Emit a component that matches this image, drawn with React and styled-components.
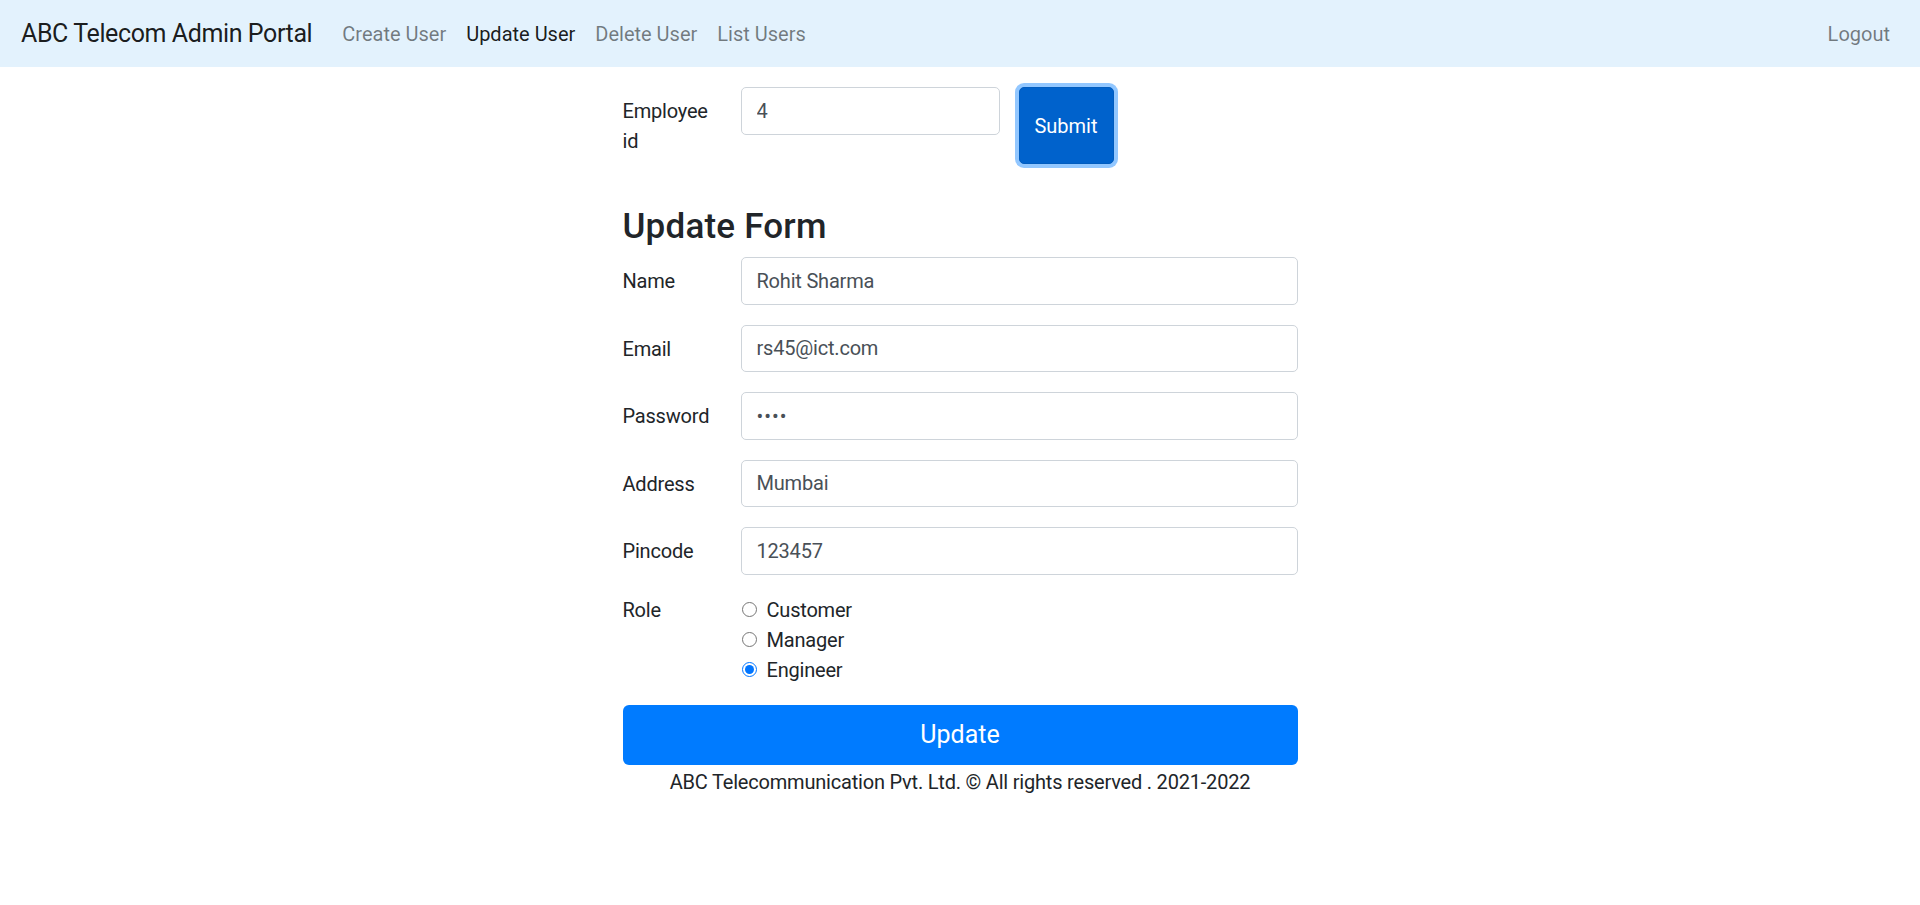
import React from 'react';
import styled, { createGlobalStyle } from 'styled-components';

const GlobalStyle = createGlobalStyle`
  body {
    margin: 0;
    background: #fff;
    color: #212529;
    font-family: Roboto, "Liberation Sans", sans-serif;
    font-size: 20px;
    line-height: 1.5;
    letter-spacing: -0.2px;
  }
  * {
    box-sizing: border-box;
  }
`;

const App = () => {
  return (
    <>
      <GlobalStyle />
      <Navbar>
        <Brand>ABC Telecom Admin Portal</Brand>
        <NavList>
          <NavLink>Create User</NavLink>
          <NavLink active>Update User</NavLink>
          <NavLink>Delete User</NavLink>
          <NavLink>List Users</NavLink>
        </NavList>
        <NavLink>Logout</NavLink>
      </Navbar>
      <Main>
        <SearchRow>
          <Label narrow>Employee id</Label>
          <SearchInput defaultValue="4" />
          <SubmitButton>Submit</SubmitButton>
        </SearchRow>

        <Heading>Update Form</Heading>
        <FormRow>
          <Label>Name</Label>
          <Input defaultValue="Rohit Sharma" />
        </FormRow>
        <FormRow>
          <Label>Email</Label>
          <Input defaultValue="rs45@ict.com" />
        </FormRow>
        <FormRow>
          <Label>Password</Label>
          <Input type="password" defaultValue="1234" />
        </FormRow>
        <FormRow>
          <Label>Address</Label>
          <Input defaultValue="Mumbai" />
        </FormRow>
        <FormRow>
          <Label>Pincode</Label>
          <Input defaultValue="123457" />
        </FormRow>
        <FormRow>
          <Label flush>Role</Label>
          <RadioGroup>
            {['Customer', 'Manager', 'Engineer'].map((role) => (
              <RadioItem key={role}>
                <Radio type="radio" name="role" defaultChecked={role === 'Engineer'} />
                {role}
              </RadioItem>
            ))}
          </RadioGroup>
        </FormRow>
        <UpdateButton>Update</UpdateButton>
        <Footer>ABC Telecommunication Pvt. Ltd. © All rights reserved . 2021-2022</Footer>
      </Main>
    </>
  );
};

const Navbar = styled.nav`
  height: 67px;
  background: #e3f2fd;
  display: flex;
  align-items: center;
  padding: 0 20px 0 21px;
`;

const Brand = styled.span`
  font-size: 25px;
  letter-spacing: -0.4px;
  color: rgba(0, 0, 0, 0.9);
  margin-right: 20px;
  white-space: nowrap;
`;

const NavList = styled.div`
  display: flex;
  flex: 1;
`;

const NavLink = styled.span`
  padding: 0 10px;
  font-size: 20px;
  letter-spacing: 0;
  color: ${(p) => (p.active ? 'rgba(0, 0, 0, 0.9)' : 'rgba(0, 0, 0, 0.5)')};
  white-space: nowrap;
`;

const Main = styled.main`
  width: 675px;
  margin: 20px auto 0;
`;

const SearchRow = styled.div`
  display: flex;
  align-items: flex-start;
`;

const Label = styled.label`
  width: 118px;
  flex-shrink: 0;
  padding-top: ${(p) => (p.flush ? '0' : '9px')};
  padding-right: ${(p) => (p.narrow ? '28px' : '0')};
  line-height: 30px;
  color: #212529;
`;

const Input = styled.input`
  flex: 1;
  min-width: 0;
  height: 47.5px;
  padding: 0 15px;
  border: 1px solid #ced4da;
  border-radius: 5px;
  font-family: inherit;
  font-size: 20px;
  color: #495057;
  background: #fff;
  outline: none;
  letter-spacing: ${(p) => (p.type === 'password' ? '1px' : '-0.2px')};
`;

const SearchInput = styled(Input)`
  flex: 0 0 259px;
  width: 259px;
`;

const SubmitButton = styled.button`
  margin-left: 19px;
  width: 95px;
  height: 77px;
  padding-top: 2px;
  border: 1px solid #005cbf;
  border-radius: 5px;
  background: #0062cc;
  color: #fff;
  font-family: inherit;
  font-size: 20px;
  box-shadow: 0 0 0 4px rgba(38, 143, 255, 0.5);
`;

const Heading = styled.h3`
  margin: 42px 0 9px;
  font-size: 35px;
  font-weight: 500;
  line-height: 1.2;
  letter-spacing: 0.2px;
  color: #212529;
`;

const FormRow = styled.div`
  display: flex;
  align-items: flex-start;
  margin-bottom: 20px;
`;

const RadioGroup = styled.div`
  display: flex;
  flex-direction: column;
`;

const RadioItem = styled.label`
  display: flex;
  align-items: center;
  line-height: 30px;
  color: #212529;
`;

const Radio = styled.input`
  width: 15px;
  height: 15px;
  margin: 0 10px 0 1px;
  accent-color: #0075ff;
`;

const UpdateButton = styled.button`
  display: block;
  width: 100%;
  height: 60px;
  border: none;
  border-radius: 6px;
  background: #007bff;
  color: #fff;
  font-family: inherit;
  font-size: 25px;
`;

const Footer = styled.footer`
  text-align: center;
  line-height: 30px;
  color: #212529;
  padding-top: 2px;
`;

export default App;
